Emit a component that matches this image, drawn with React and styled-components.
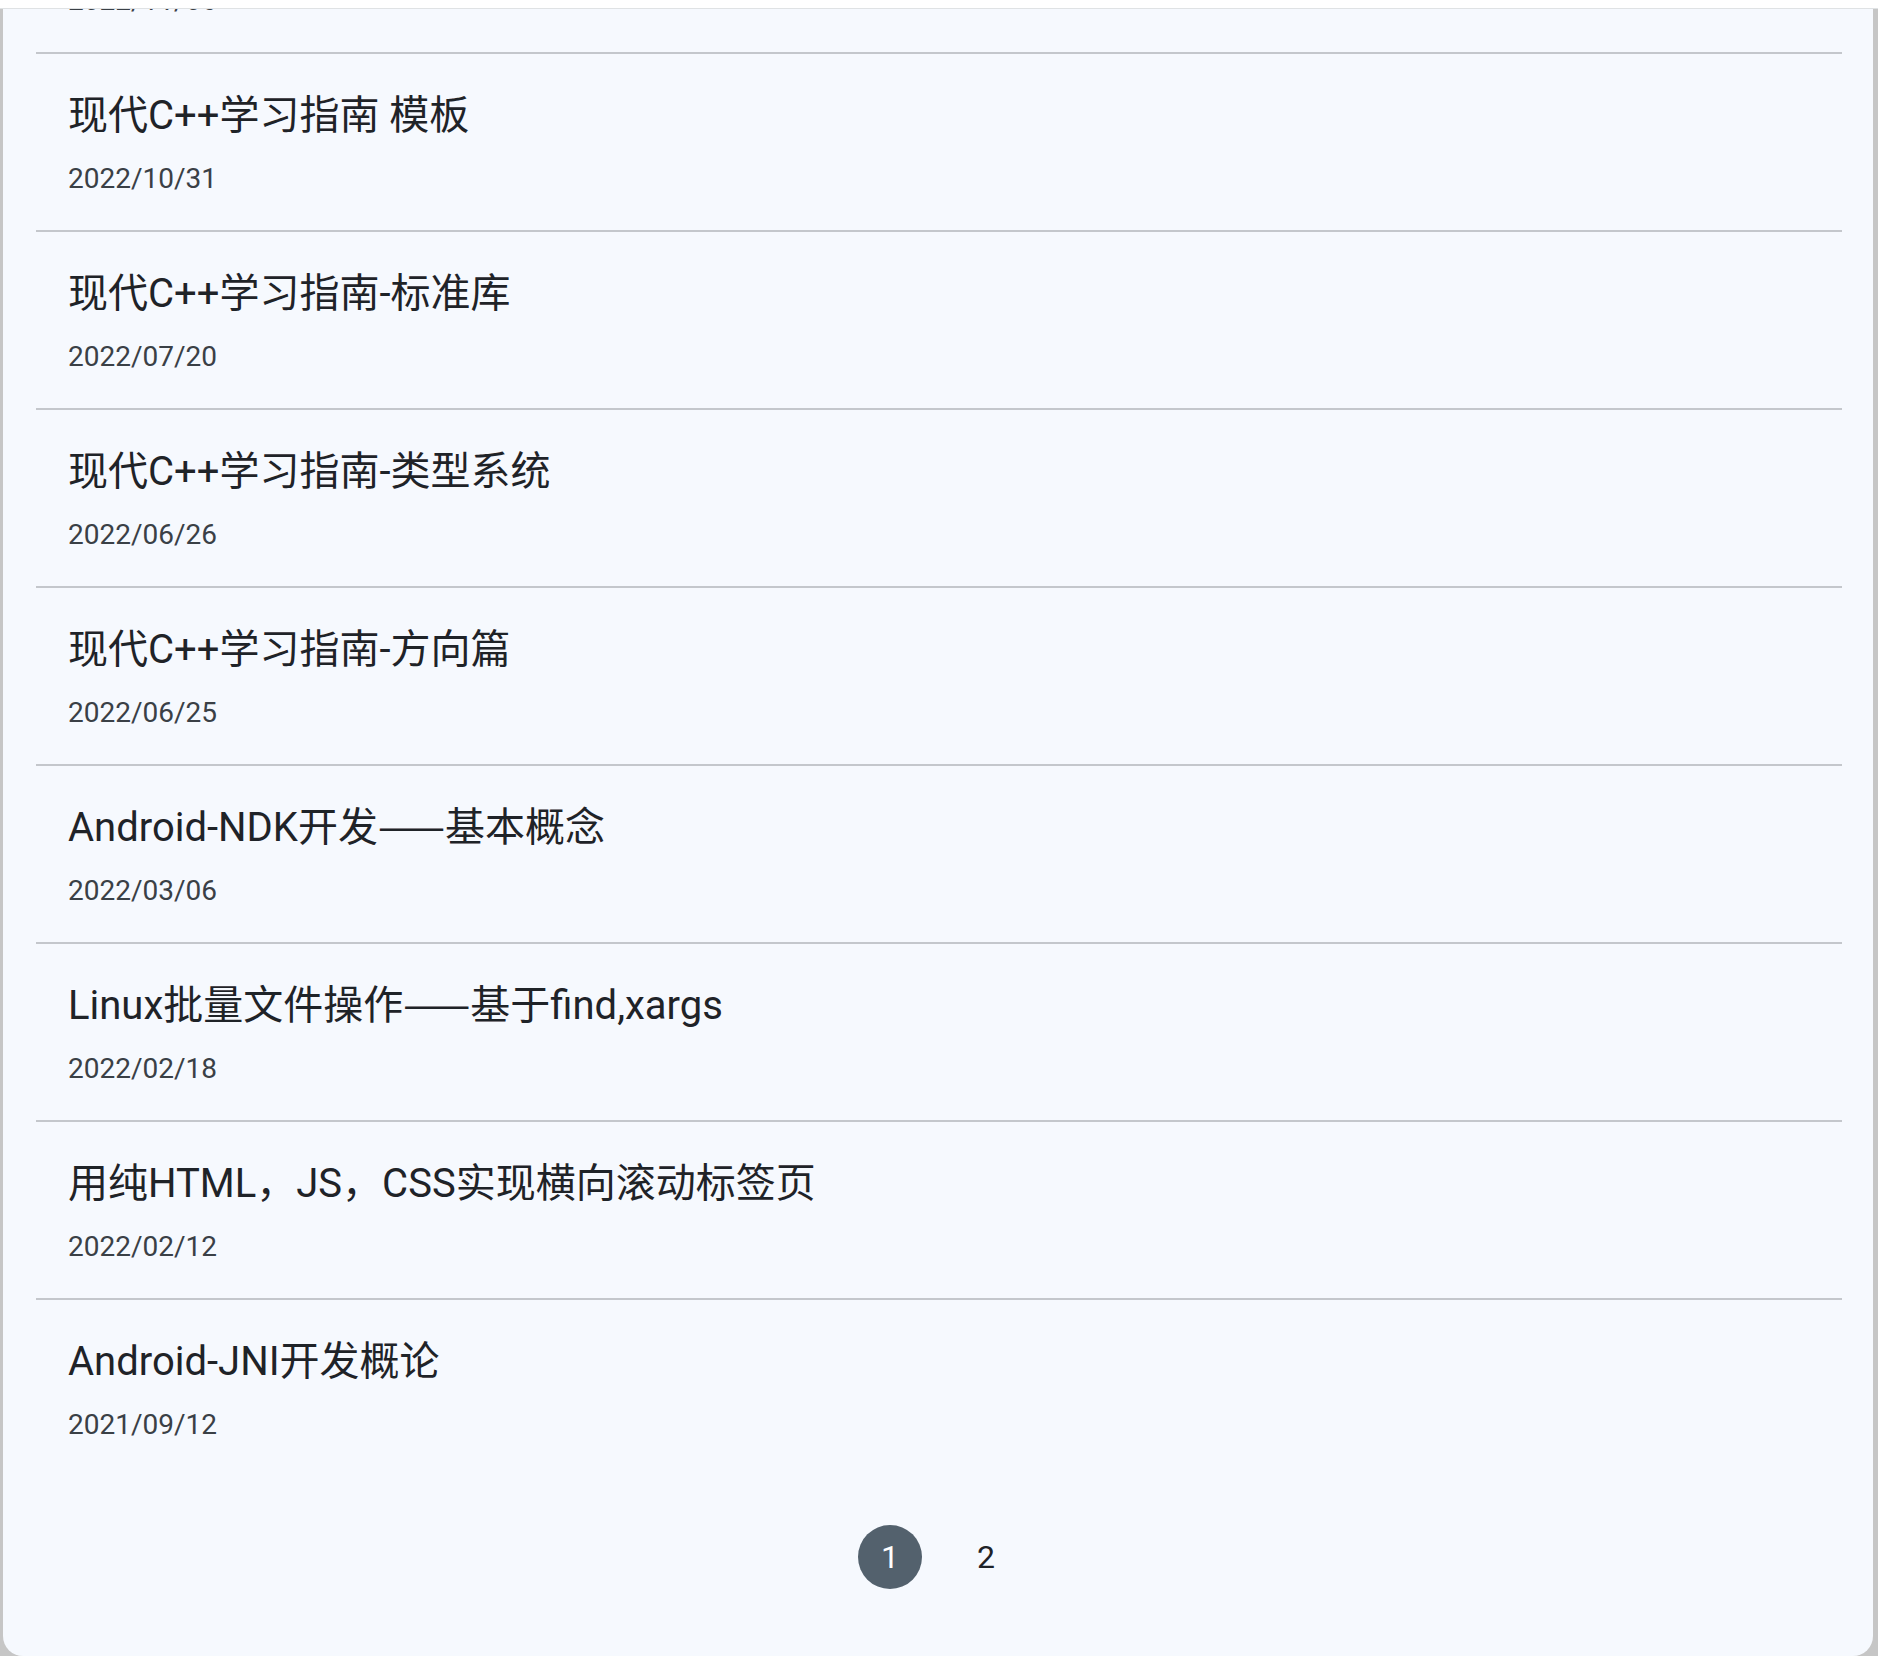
import React from "react";
import styled, { createGlobalStyle } from "styled-components";

const GlobalStyle = createGlobalStyle`
  html, body {
    margin: 0;
    padding: 0;
    height: 100%;
  }

  body {
    background-color: #c6c6c6;
    font-family: Roboto, "Noto Sans CJK SC", sans-serif;
  }

  #root {
    height: 100%;
  }
`;

const Page = styled.div`
  display: flex;
  flex-direction: column;
  height: 100vh;
  background-color: #c6c6c6;
`;

const TopBar = styled.div`
  flex-shrink: 0;
  height: 8px;
  background-color: #ffffff;
  border-bottom: 1px solid #dfe2e4;
`;

const Panel = styled.main`
  flex: 1;
  min-height: 0;
  margin: 0 5px 0 3px;
  display: flex;
  flex-direction: column;
  justify-content: flex-end;
  overflow: hidden;
  background-color: #f6f9fe;
  border-radius: 0 0 20px 20px;
`;

const List = styled.ul`
  flex-shrink: 0;
  list-style: none;
  margin: 0 31px 0 33px;
  padding: 0;
`;

const Item = styled.li`
  display: flex;
  flex-direction: column;
  gap: 16px;
  padding: 35px 32px 31px;

  & + & {
    border-top: 2px solid #c4c7cc;
  }
`;

const Title = styled.h3`
  margin: 0;
  height: 54px;
  font-size: 40px;
  line-height: 54px;
  font-weight: 400;
  color: #1f2328;
  white-space: nowrap;
`;

// 中文破折号用 CJK 字体，两段连成一条线
const Dash = styled.span`
  font-family: "Noto Sans CJK SC", sans-serif;
  line-height: 0;
`;

const Date = styled.span`
  font-size: 28px;
  line-height: 40px;
  color: #3a4046;
`;

const Pagination = styled.nav`
  flex-shrink: 0;
  display: flex;
  justify-content: center;
  gap: 32px;
  padding: 49px 0 67px;
`;

const PageLink = styled.span`
  width: 64px;
  height: 64px;
  border-radius: 50%;
  display: flex;
  align-items: center;
  justify-content: center;
  font-size: 32px;
  color: ${(props) => (props.active ? "#ffffff" : "#1f2328")};
  background-color: ${(props) => (props.active ? "#53616d" : "transparent")};
`;

const posts = [
  { title: "现代C++学习指南 并发", date: "2022/11/06" },
  { title: "现代C++学习指南 模板", date: "2022/10/31" },
  { title: "现代C++学习指南-标准库", date: "2022/07/20" },
  { title: "现代C++学习指南-类型系统", date: "2022/06/26" },
  { title: "现代C++学习指南-方向篇", date: "2022/06/25" },
  { title: "Android-NDK开发——基本概念", date: "2022/03/06" },
  { title: "Linux批量文件操作——基于find,xargs", date: "2022/02/18" },
  { title: "用纯HTML，JS，CSS实现横向滚动标签页", date: "2022/02/12" },
  { title: "Android-JNI开发概论", date: "2021/09/12" },
];

const renderTitle = (title) => {
  const parts = title.split("——");
  return parts.map((part, i) => (
    <React.Fragment key={i}>
      {i > 0 && <Dash>——</Dash>}
      {part}
    </React.Fragment>
  ));
};

const App = () => {
  return (
    <>
      <GlobalStyle />
      <Page>
        <TopBar />
        <Panel>
          <List>
            {posts.map((post) => (
              <Item key={post.title}>
                <Title>{renderTitle(post.title)}</Title>
                <Date>{post.date}</Date>
              </Item>
            ))}
          </List>
          <Pagination>
            <PageLink active>1</PageLink>
            <PageLink>2</PageLink>
          </Pagination>
        </Panel>
      </Page>
    </>
  );
};

export default App;
